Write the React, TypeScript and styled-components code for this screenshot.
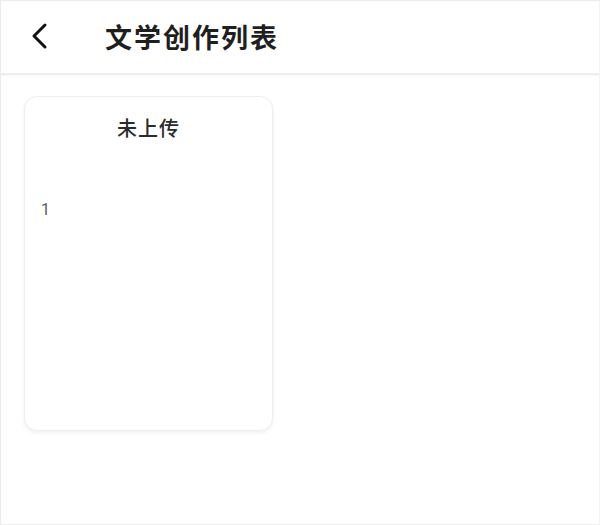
import React from "react";
import styled, { createGlobalStyle } from "styled-components";

const Global = createGlobalStyle`
  html, body { margin: 0; padding: 0; background: #ffffff; }
  body { font-family: "Noto Sans CJK SC", "Noto Sans", sans-serif; }
  * { box-sizing: border-box; }
`;

const Page = styled.div`
  width: 600px;
  height: 525px;
  border: 1px solid #ececec;
  border-right-color: #f3f3f3;
  background: #fff;
  display: flex;
  flex-direction: column;
  overflow: hidden;
`;

const Header = styled.header`
  height: 74px;
  flex: none;
  display: flex;
  align-items: center;
  padding-left: 27px;
  border-bottom: 2px solid #ededed;
  box-shadow: 0 1px 2px rgba(0, 0, 0, 0.04);
`;

const BackButton = styled.button`
  width: 24px;
  height: 30px;
  padding: 0;
  border: none;
  background: none;
  display: flex;
  align-items: center;
  justify-content: center;
  margin-right: 53px;
  margin-top: -2px;
`;

const Title = styled.h1`
  margin: 0;
  font-size: 27px;
  font-weight: 700;
  letter-spacing: 2px;
  color: #1f1f1f;
  line-height: 1;
  margin-top: -2px;
`;

const Content = styled.main`
  flex: 1;
  padding: 21px 0 0 23px;
  display: flex;
  align-items: flex-start;
`;

const Card = styled.div`
  width: 249px;
  height: 335px;
  border-radius: 13px;
  border: 1px solid #eeeeee;
  box-shadow: 0 2px 4px rgba(0, 0, 0, 0.06);
  background: #fff;
  display: flex;
  flex-direction: column;
`;

const CardTitle = styled.div`
  text-align: center;
  font-size: 20px;
  font-weight: 500;
  color: #2b2b2b;
  margin-top: 18px;
  line-height: 26px;
  letter-spacing: 1px;
`;

const CardBody = styled.div`
  margin-top: 59px;
  padding-left: 16px;
  font-family: "Roboto", "Noto Sans", sans-serif;
  font-size: 16px;
  color: #5a5a5a;
  line-height: 20px;
`;

export default function App() {
  return (
    <>
      <Global />
      <Page>
        <Header>
          <BackButton aria-label="返回">
            <svg width="20" height="28" viewBox="0 0 20 28">
              <path
                d="M15 3 L4 14 L15 25"
                fill="none"
                stroke="#111"
                strokeWidth="3"
                strokeLinecap="round"
                strokeLinejoin="round"
              />
            </svg>
          </BackButton>
          <Title>文学创作列表</Title>
        </Header>
        <Content>
          <Card>
            <CardTitle>未上传</CardTitle>
            <CardBody>1</CardBody>
          </Card>
        </Content>
      </Page>
    </>
  );
}
